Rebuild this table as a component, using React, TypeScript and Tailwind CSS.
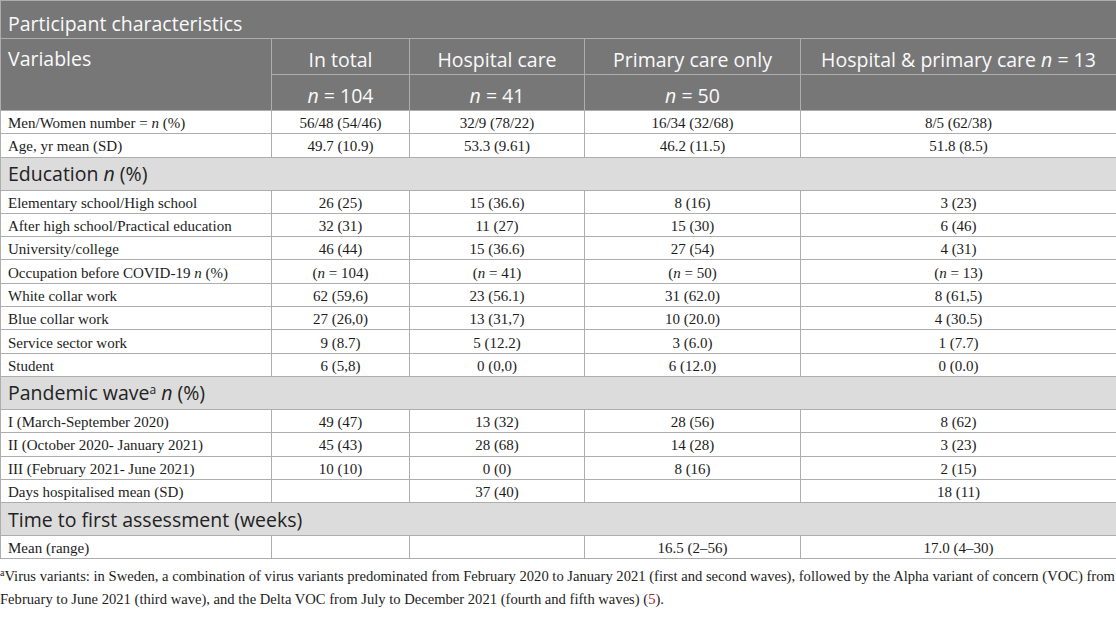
const serif = "font-['Liberation_Serif','Times_New_Roman',serif]";
const sans = "font-['Open_Sans','Noto_Sans',sans-serif]";

type Row =
  | { kind: "data"; cells: [string, string, string, string, string] }
  | { kind: "section"; label: React.ReactNode };

const rows: Row[] = [
  { kind: "data", cells: ["Men/Women number = n (%)", "56/48 (54/46)", "32/9 (78/22)", "16/34 (32/68)", "8/5 (62/38)"] },
  { kind: "data", cells: ["Age, yr mean (SD)", "49.7 (10.9)", "53.3 (9.61)", "46.2 (11.5)", "51.8 (8.5)"] },
  { kind: "section", label: <>Education <i>n</i> (%)</> },
  { kind: "data", cells: ["Elementary school/High school", "26 (25)", "15 (36.6)", "8 (16)", "3 (23)"] },
  { kind: "data", cells: ["After high school/Practical education", "32 (31)", "11 (27)", "15 (30)", "6 (46)"] },
  { kind: "data", cells: ["University/college", "46 (44)", "15 (36.6)", "27 (54)", "4 (31)"] },
  { kind: "data", cells: ["Occupation before COVID-19 n (%)", "(n = 104)", "(n = 41)", "(n = 50)", "(n = 13)"] },
  { kind: "data", cells: ["White collar work", "62 (59,6)", "23 (56.1)", "31 (62.0)", "8 (61,5)"] },
  { kind: "data", cells: ["Blue collar work", "27 (26,0)", "13 (31,7)", "10 (20.0)", "4 (30.5)"] },
  { kind: "data", cells: ["Service sector work", "9 (8.7)", "5 (12.2)", "3 (6.0)", "1 (7.7)"] },
  { kind: "data", cells: ["Student", "6 (5,8)", "0 (0,0)", "6 (12.0)", "0 (0.0)"] },
  { kind: "section", label: <>Pandemic wave<sup className="text-[12px]">a</sup> <i>n</i> (%)</> },
  { kind: "data", cells: ["I (March-September 2020)", "49 (47)", "13 (32)", "28 (56)", "8 (62)"] },
  { kind: "data", cells: ["II (October 2020- January 2021)", "45 (43)", "28 (68)", "14 (28)", "3 (23)"] },
  { kind: "data", cells: ["III (February 2021- June 2021)", "10 (10)", "0 (0)", "8 (16)", "2 (15)"] },
  { kind: "data", cells: ["Days hospitalised mean (SD)", "", "37 (40)", "", "18 (11)"] },
  { kind: "section", label: <>Time to first assessment (weeks)</> },
  { kind: "data", cells: ["Mean (range)", "", "", "16.5 (2–56)", "17.0 (4–30)"] },
];

// renders "n" in italics where it stands as a symbol
function withN(text: string) {
  const parts = text.split(/(\bn\b)/);
  return parts.map((p, i) => (p === "n" ? <i key={i}>n</i> : <span key={i}>{p}</span>));
}

export default function App() {
  return (
    <div className="w-[1116px] bg-white">
      <table className="w-[1116px] table-fixed border-collapse">
        <colgroup>
          <col className="w-[271px]" />
          <col className="w-[138px]" />
          <col className="w-[175px]" />
          <col className="w-[216px]" />
          <col className="w-[316px]" />
        </colgroup>
        <thead className={`${sans} text-[19.5px] text-[#fafafa]`}>
          <tr className="h-[38px] bg-[#777777]">
            <th colSpan={5} className="border border-[#adadad] px-[7px] pt-[9px] pb-0 text-left font-normal leading-[26px]">
              Participant characteristics
            </th>
          </tr>
          <tr className="h-[36px] bg-[#777777]">
            <th rowSpan={2} className="border border-[#adadad] px-[7px] pt-[7px] text-left align-top font-normal leading-[26px]">
              Variables
            </th>
            <th className="border border-[#adadad] pt-[6px] font-normal leading-[26px]">In total</th>
            <th className="border border-[#adadad] pt-[6px] font-normal leading-[26px]">Hospital care</th>
            <th className="border border-[#adadad] pt-[6px] font-normal leading-[26px]">Primary care only</th>
            <th className="border border-[#adadad] pt-[6px] font-normal leading-[26px]">
              Hospital &amp; primary care <i>n</i> = 13
            </th>
          </tr>
          <tr className="h-[36px] bg-[#777777]">
            <th className="border border-[#adadad] pt-[6px] font-normal leading-[26px]"><i>n</i> = 104</th>
            <th className="border border-[#adadad] pt-[6px] font-normal leading-[26px]"><i>n</i> = 41</th>
            <th className="border border-[#adadad] pt-[6px] font-normal leading-[26px]"><i>n</i> = 50</th>
            <th className="border border-[#adadad] font-normal"></th>
          </tr>
        </thead>
        <tbody className="text-[#1c1c1c]">
          {rows.map((r, i) =>
            r.kind === "section" ? (
              <tr key={i} className="h-[33px] bg-[#dcdcdc]">
                <td colSpan={5} className={`${sans} border border-[#adadad] px-[7px] pt-[1px] text-[19.5px] leading-[26px] text-[#222]`}>
                  {r.label}
                </td>
              </tr>
            ) : (
              <tr key={i} className={`h-[23.3px] ${serif} text-[15px]`}>
                {r.cells.map((c, j) => (
                  <td
                    key={j}
                    className={`border border-[#adadad] px-[7px] pt-[2px] pb-0 leading-[20px] ${j === 0 ? "text-left" : "text-center"}`}
                  >
                    {withN(c)}
                  </td>
                ))}
              </tr>
            )
          )}
        </tbody>
      </table>
      <p className={`${serif} mt-[6px] text-[14.6px] leading-[23px] text-[#1c1c1c]`}>
        <sup className="text-[10px]">a</sup>Virus variants: in Sweden, a combination of virus variants predominated from February 2020 to January 2021 (first and second waves), followed by the Alpha variant of concern (VOC) from February to June 2021 (third wave), and the Delta VOC from July to December 2021 (fourth and fifth waves) (<span className="text-[#a3262a]">5</span>).
      </p>
    </div>
  );
}
